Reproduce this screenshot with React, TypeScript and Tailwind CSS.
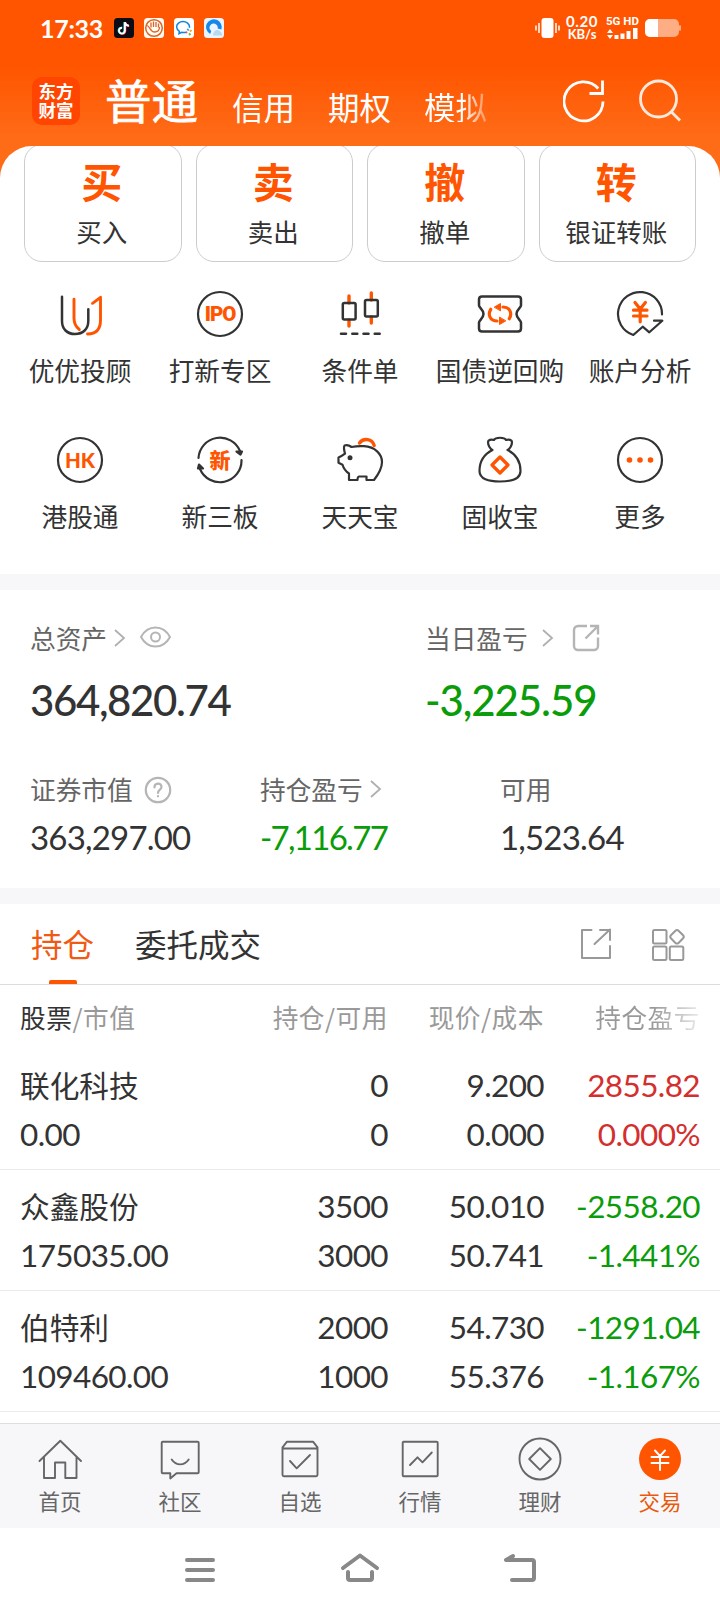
import type { ReactNode } from "react";

const DARK = "#333333";
const ORANGE = "#ff5500";

function Icon({ children, size = 48, stroke = DARK, width = 2.2, className = "" }: {
  children: ReactNode; size?: number; stroke?: string; width?: number; className?: string;
}) {
  return (
    <svg width={size} height={size} viewBox={`0 0 ${size} ${size}`} fill="none" stroke={stroke}
      strokeWidth={width} strokeLinecap="round" strokeLinejoin="round" className={`shrink-0 ${className}`}>
      {children}
    </svg>
  );
}

function Chevron() {
  return (
    <svg width="12" height="18" viewBox="0 0 12 18" fill="none" stroke="#b0b0b0" strokeWidth="1.8" className="shrink-0">
      <path d="M1 1l9 8-9 8" />
    </svg>
  );
}

function StatusBar() {
  return (
    <div className="flex h-[56px] items-center pl-[40px] pr-[39px] text-white">
      <span className="w-[74px] font-[Lato,sans-serif] text-[25px] font-bold leading-none tracking-[-0.3px]">17:33</span>
      <div className="flex gap-[10px]">
        <svg width="20" height="20" viewBox="0 0 20 20">
          <rect width="20" height="20" rx="3.5" fill="#0d0b14" />
          <g fill="none" strokeWidth="1.9">
            <path d="M10.4 4v8.6a2.9 2.9 0 1 1-2.7-3M10.4 4.4c.5 2 1.7 3 3.9 3.2" stroke="#25f4ee" />
            <path d="M11.4 4.4v8.6a2.9 2.9 0 0 1-4.6 2.3M11.6 5c.5 2 1.7 3 3.7 3.2" stroke="#fe2c55" />
            <path d="M10.9 4.2v8.6a2.9 2.9 0 1 1-2.7-3M11 4.6c.5 2 1.7 3 3.9 3.2" stroke="#fff" />
          </g>
        </svg>
        <svg width="20" height="20" viewBox="0 0 20 20" fill="none" stroke="#d9662b">
          <rect width="20" height="20" rx="3.5" fill="#fffaf2" stroke="none" />
          <circle cx="10" cy="10" r="8.3" strokeWidth="1.5" />
          <path d="M3 7.500c3 1 3.500 6.500 7.500 6.500 3 0 5-2 5-5M7 9.500V4.500M9.500 9V3.500M12 9V4M14.500 9.500V5.500" strokeWidth="1.3" />
        </svg>
        <svg width="20" height="20" viewBox="0 0 20 20" fill="none">
          <rect width="20" height="20" rx="3.5" fill="#fff" />
          <path d="M12.500 14.200c-1.500.5-3.300.5-4.700.1L5 15.700l.4-2.400C3.500 12 2.600 10.500 2.600 8.800c0-3 2.900-5.200 6.400-5.200s6.500 2.300 6.500 5.200v1" stroke="#1283d8" strokeWidth="1.5" />
          <path d="M13.200 10.800l1.600 1.700" stroke="#2aa5e8" strokeWidth="1.8" />
          <path d="M17.500 12l-1.500 1.700" stroke="#f7a520" strokeWidth="1.8" />
          <path d="M16.500 17l-1.600-1.600" stroke="#6cba3a" strokeWidth="1.8" />
          <path d="M11.800 14.800l1.500-.9" stroke="#e65b3a" strokeWidth="1.6" />
        </svg>
        <svg width="20" height="20" viewBox="0 0 20 20" fill="none">
          <rect width="20" height="20" rx="3.5" fill="#eaf5ff" />
          <path d="M6.200 16A7.800 7.800 0 1 1 17.300 11.500l-3.600-1a4.100 4.100 0 1 0-6.500 2.500z" fill="#1787e8" />
          <path d="M9 17.500c0-3 2-5.500 4-5.500s5 2 5.500 5.500z" fill="#b9d8f2" />
        </svg>
      </div>
      <div className="ml-auto flex items-center">
        <svg width="25" height="20" viewBox="0 0 25 20" fill="none" stroke="#fff" strokeWidth="1.5" className="mr-[5px]">
          <rect x="6.5" y="0" width="12" height="20" rx="3" fill="#fff" stroke="none" />
          <path d="M1 7.500v5M4 5v10M21 5v10M24 7.500v5" />
        </svg>
        <div className="flex w-[34px] flex-col items-center font-[Lato,sans-serif] font-bold">
          <span className="text-[15px] leading-[13px] tracking-[0.6px]">0.20</span>
          <span className="text-[13px] leading-[13px]">KB/s</span>
        </div>
        <div className="ml-[7px] flex w-[32px] flex-col gap-[2px]">
          <span className="whitespace-nowrap font-[Roboto,sans-serif] text-[11.5px] font-bold leading-[10px]">5G HD</span>
          <svg width="32" height="12" viewBox="0 0 32 12" fill="#fff">
            <path d="M1 5l3-4 3 4zM1 7l3 4 3-4zM8.500 7h4v4h-4zM14.500 5.500h4V11h-4zM20.500 3h4v8h-4zM27 0h4.500v11H27z" />
          </svg>
        </div>
        <svg width="36" height="18" viewBox="0 0 36 18" className="ml-[7px]">
          <path d="M5 0h24a5 5 0 0 1 5 5v1.500h2v5h-2V13a5 5 0 0 1-5 5H5a5 5 0 0 1-5-5V5a5 5 0 0 1 5-5z" fill="#ffad85" />
          <path d="M5 0h8v18H5a5 5 0 0 1-5-5V5a5 5 0 0 1 5-5z" fill="#fff" />
        </svg>
      </div>
    </div>
  );
}

function TitleBar() {
  return (
    <div className="flex h-[90px] items-center pl-[32px] pr-[39px] text-white">
      <div className="grid h-[48px] w-[48px] shrink-0 place-content-center rounded-[10px] bg-[#ff4500] pb-[2px] text-center text-[17.5px] font-bold leading-[19.5px]">
        <span>东方</span>
        <span>财富</span>
      </div>
      <span className="ml-[25px] w-[127px] pb-[3px] text-[46.5px] leading-none [-webkit-text-stroke:0.7px_white]">普通</span>
      <div className="flex gap-[33px] pt-[11px] text-[31.5px] leading-none">
        <span>信用</span>
        <span>期权</span>
        <span className="bg-gradient-to-r from-white from-60% to-white/30 bg-clip-text text-transparent">模拟</span>
      </div>
      <svg width="42" height="44" viewBox="0 0 42 44" fill="none" stroke="#fff" strokeWidth="2.8" className="ml-auto mr-[34px] shrink-0">
        <path d="M40 22.500A19.500 19.500 0 1 1 35.200 9.500M39.500 1.500v13h-13" />
      </svg>
      <svg width="42" height="44" viewBox="0 0 42 44" fill="none" stroke="#ffe9dc" strokeWidth="2.8" className="shrink-0">
        <circle cx="19.5" cy="20" r="18" />
        <path d="M32 32.500l9 9" />
      </svg>
    </div>
  );
}

const actions = [
  ["买", "买入"],
  ["卖", "卖出"],
  ["撤", "撤单"],
  ["转", "银证转账"],
];

function Actions() {
  return (
    <div className="-mt-[2px] grid grid-cols-4 gap-[14px] px-[24px]">
      {actions.map(([glyph, label]) => (
        <div key={label} className="flex h-[118px] flex-col items-center rounded-[18px] border border-[#cccccc] pr-[2px] pt-[15px]">
          <span className="text-[41px] font-bold leading-[40px] text-[#ff5500]">{glyph}</span>
          <span className="mt-[18px] text-[25.5px] leading-[26px] text-[#333]">{label}</span>
        </div>
      ))}
    </div>
  );
}

const services: { label: string; icon: ReactNode }[] = [
  {
    label: "优优投顾",
    icon: (
      <Icon width={2.5}>
        <path d="M6 6.700V31C6 39 11 44 19 44s13.300-5 13.300-13V19.300" />
        <path d="M18 9.300V28c0 6 2 9 5.300 11.500M31.500 44C40 44 44.500 39 44.500 30V7.300l-8 6" stroke={ORANGE} strokeWidth="2.9" />
      </Icon>
    ),
  },
  {
    label: "打新专区",
    icon: (
      <Icon>
        <circle cx="24" cy="24" r="22" />
        <text x="8.8" y="31" fontFamily="Roboto" fontWeight="900" fontSize="20.5" fill={ORANGE} stroke="none" textLength="31.5" lengthAdjust="spacing">IPO</text>
      </Icon>
    ),
  },
  {
    label: "条件单",
    icon: (
      <Icon width={2.5}>
        <path d="M13 6v7M13 30v6M35.300 3v7M35.300 27v6" stroke={ORANGE} strokeWidth="3.4" />
        <rect x="6.8" y="13" width="12.8" height="16.5" rx="1.5" />
        <rect x="29" y="10" width="12.8" height="16.5" rx="1.5" />
        <path d="M5 43.700h5M16.300 43.700h5M27.500 43.700h5M38.700 43.700h5" />
      </Icon>
    ),
  },
  {
    label: "国债逆回购",
    icon: (
      <Icon width={2.5}>
        <path d="M6 6.500h36q3 0 3 3v6c0 2-4.500 4-4.500 8.500s4.500 6.500 4.500 8.500v6q0 3-3 3H6q-3 0-3-3v-6c0-2 4.500-4 4.500-8.500S3 17.500 3 15.500v-6q0-3 3-3z" />
        <path d="M14.700 19.300C11.500 24.500 14 31 21 31M33.300 28.700C36.500 23.500 34 17 27 17" stroke={ORANGE} strokeWidth="3.2" />
        <path d="M23.500 27.500v7l6-3.500zM24.500 20.500v-7l-6 3.500z" fill={ORANGE} stroke={ORANGE} strokeWidth="1" />
      </Icon>
    ),
  },
  {
    label: "账户分析",
    icon: (
      <Icon>
        <path d="M46 24.500A22 22 0 1 0 17.300 45l9.400-8.300 6.600 5.600 13-11.600H38" />
        <path d="M19 12.500l5.200 6.500 5.200-6.500M17.500 20.200h13.500M17.500 26h13.500M24.200 19.500v12.300" stroke={ORANGE} strokeWidth="3.2" />
      </Icon>
    ),
  },
  {
    label: "港股通",
    icon: (
      <Icon>
        <circle cx="24" cy="24" r="22" />
        <text x="24" y="31.5" textAnchor="middle" fontFamily="Lato" fontWeight="900" fontSize="20.5" fill={ORANGE} stroke="none">HK</text>
      </Icon>
    ),
  },
  {
    label: "新三板",
    icon: (
      <Icon>
        <path d="M2.500 22A21.600 21.600 0 0 1 44 15M45.500 24A21.600 21.600 0 0 1 4 33" />
        <path d="M40.500 15.500h5.500l-1.500 3zM2 32.500l1-4 4 4z" fill={DARK} />
        <text x="24" y="31.5" textAnchor="middle" fontFamily="Noto Sans CJK SC" fontWeight="900" fontSize="21" fill={ORANGE} stroke="none">新</text>
      </Icon>
    ),
  },
  {
    label: "天天宝",
    icon: (
      <Icon>
        <path d="M23.500 7a8.300 8.300 0 0 1 14.700 2.500" stroke={ORANGE} strokeWidth="3.4" />
        <path d="M9 17.500C8 14 7.500 11 8.500 9.500c2.500-.8 5 0 7 1.500 5-1 9-1 12.500-.8 11 .5 18 8 18 15.800 0 7-4.500 13.500-8 18h-7.500v-3.500H23c-1.500.3-1.500 1.500-1.500 3.500H13v-6.500c-3-2-5.500-5.500-6.500-8.800l-4-2v-5.200c3-1.300 4.500-2.500 6.500-4z" />
        <circle cx="14" cy="21.7" r="2.5" fill={DARK} stroke="none" />
      </Icon>
    ),
  },
  {
    label: "固收宝",
    icon: (
      <Icon>
        <path d="M16.500 14c-2.500-1-4.500-5-4.500-8 0-2 3-3 6-2 1.500-3 10.500-3 12 0 3-1 6 0 6 2 0 3-2 7-4.500 8 7 3.500 13 10 13 21 0 8-9 10.500-20.500 10.500S3.500 43 3.500 35c0-11 6-17.500 13-21z" />
        <path d="M24 21l8 8-8 8-8-8z" stroke={ORANGE} strokeWidth="3.2" />
      </Icon>
    ),
  },
  {
    label: "更多",
    icon: (
      <Icon>
        <circle cx="24" cy="24" r="22" />
        <g fill={ORANGE} stroke="none">
          <circle cx="13.5" cy="24" r="2.8" />
          <circle cx="24" cy="24" r="2.8" />
          <circle cx="34.5" cy="24" r="2.8" />
        </g>
      </Icon>
    ),
  },
];

function Services() {
  return (
    <div className="mt-[28px] grid grid-cols-5 gap-y-[52px] px-[10px]">
      {services.map((s) => (
        <div key={s.label} className="flex h-[94px] flex-col items-center">
          {s.icon}
          <span className="mt-[19px] whitespace-nowrap text-[25.7px] leading-[26px] text-[#333]">{s.label}</span>
        </div>
      ))}
    </div>
  );
}

const labelText = "text-[25.7px] leading-[26px] text-[#666]";
const bigText = "font-[Lato,sans-serif] text-[42px] font-medium leading-[42px]";
const midText = "font-[Lato,sans-serif] text-[33px] leading-[33px]";

function Assets() {
  return (
    <div className="h-[298px] px-[30px] pt-[34px]">
      <div className="flex">
        <div className="w-[395px]">
          <div className="flex h-[28px] items-center">
            <span className={labelText}>总资产</span>
            <span className="ml-[7px]"><Chevron /></span>
            <svg width="31" height="22" viewBox="0 0 31 22" fill="none" stroke="#b5b5b5" strokeWidth="2" className="-mt-[2px] ml-[14px]">
              <path d="M1 11C4.500 4.500 9 1.500 15.500 1.500S26.500 4.500 30 11c-3.500 6.500-8 9.500-14.500 9.500S4.500 17.500 1 11z" />
              <circle cx="15.5" cy="11" r="4.5" />
            </svg>
          </div>
          <div className={`mt-[27px] tracking-[-1.4px] text-[#333] ${bigText}`}>364,820.74</div>
        </div>
        <div>
          <div className="flex h-[28px] items-center">
            <span className={labelText}>当日盈亏</span>
            <span className="ml-[14px]"><Chevron /></span>
            <svg width="28" height="28" viewBox="0 0 28 28" fill="none" stroke="#b5b5b5" strokeWidth="2.4" className="ml-[18px]">
              <path d="M15 2H6a4 4 0 0 0-4 4v16a4 4 0 0 0 4 4h16a4 4 0 0 0 4-4v-8.500M13.500 14.500L25.500 2.500M18 2h8v8.500" />
            </svg>
          </div>
          <div className={`mt-[27px] tracking-[-1.1px] text-[#0a9c0a] ${bigText}`}>-3,225.59</div>
        </div>
      </div>
      <div className="mt-[54px] flex">
        <div className="w-[230px]">
          <div className="flex h-[28px] items-center">
            <span className={labelText}>证券市值</span>
            <Icon size={28} stroke="#b5b5b5" className="ml-[11px] mt-[1px]">
              <circle cx="14" cy="14" r="12.2" />
              <path d="M10.500 11.500c0-5 7-5 7-.6 0 2.800-3.500 2.700-3.500 6M14 20v.3" />
            </Icon>
          </div>
          <div className={`mt-[18px] tracking-[-0.8px] text-[#333] ${midText}`}>363,297.00</div>
        </div>
        <div className="w-[240px]">
          <div className="flex h-[28px] items-center">
            <span className={labelText}>持仓盈亏</span>
            <span className="ml-[7px]"><Chevron /></span>
          </div>
          <div className={`mt-[18px] tracking-[-1.7px] text-[#0a9c0a] ${midText}`}>-7,116.77</div>
        </div>
        <div>
          <div className="flex h-[28px] items-center">
            <span className={labelText}>可用</span>
          </div>
          <div className={`mt-[18px] tracking-[-0.8px] text-[#333] ${midText}`}>1,523.64</div>
        </div>
      </div>
    </div>
  );
}

function Tabs() {
  return (
    <div className="flex h-[81px] items-stretch border-b border-[#dddddd] pl-[31px] pr-[35px] text-[31.5px] leading-none">
      <div className="flex flex-col items-center pt-[24px] text-[#f05a14]">
        <span>持仓</span>
        <span className="mt-auto h-[4px] w-[28px] rounded-t-[2px] bg-[#ff5500]" />
      </div>
      <span className="ml-[41px] pt-[24px] text-[#333]">委托成交</span>
      <Icon size={32} stroke="#999999" width={2} className="ml-auto mt-[24px]">
        <path d="M11.500 2H2v28h28V18M14.500 16L30 1.500M20 2h10v10" />
      </Icon>
      <Icon size={34} stroke="#999999" width={2} className="ml-[39px] mt-[24px]">
        <rect x="2" y="2" width="13.5" height="13.5" rx="1.5" />
        <rect x="2" y="18.5" width="13.5" height="13.5" rx="1.5" />
        <rect x="18.8" y="18.5" width="13.5" height="13.5" rx="1.5" />
        <rect x="20.600" y="3.4" width="10.8" height="10.8" rx="2.500" transform="rotate(45 26 8.800)" />
      </Icon>
    </div>
  );
}

const holdings = [
  { name: "联化科技", value: "0.00", held: "0", free: "0", price: "9.200", cost: "0.000", pl: "2855.82", pct: "0.000%", up: true },
  { name: "众鑫股份", value: "175035.00", held: "3500", free: "3000", price: "50.010", cost: "50.741", pl: "-2558.20", pct: "-1.441%", up: false },
  { name: "伯特利", value: "109460.00", held: "2000", free: "1000", price: "54.730", cost: "55.376", pl: "-1291.04", pct: "-1.167%", up: false },
];

const columns = "grid grid-cols-[208px_160px_156px_156px] px-[20px]";

function Holdings() {
  return (
    <div className="h-[438px] overflow-hidden">
      <div className={`${columns} h-[64px] items-center text-right text-[25.7px] leading-none tracking-[0.5px] text-[#999]`}>
        <span className="text-left"><span className="text-[#333]">股票</span>/市值</span>
        <span>持仓/可用</span>
        <span>现价/成本</span>
        <span className="bg-gradient-to-r from-[#999] from-70% to-[#999]/20 bg-clip-text text-transparent">持仓盈亏</span>
      </div>
      {holdings.map((h) => (
        <div key={h.name} className={`${columns} h-[121px] grid-rows-[49px_49px] border-b border-[#ebebeb] pt-[12px] text-right font-[Lato,sans-serif] text-[31.5px] leading-[49px] tracking-[-0.6px] text-[#333]`}>
          <span className="-mt-px text-left font-['Noto_Sans_CJK_SC',sans-serif] text-[29.7px] tracking-normal">{h.name}</span>
          <span>{h.held}</span>
          <span>{h.price}</span>
          <span className={h.up ? "text-[#d32f2f]" : "text-[#0a9c0a]"}>{h.pl}</span>
          <span className="text-left">{h.value}</span>
          <span>{h.free}</span>
          <span>{h.cost}</span>
          <span className={h.up ? "text-[#d32f2f]" : "text-[#0a9c0a]"}>{h.pct}</span>
        </div>
      ))}
    </div>
  );
}

const tabs: { label: string; icon: ReactNode; active?: boolean }[] = [
  { label: "首页", icon: <path d="M3.500 26L24.300 5.800 45 26M8 22v21h11V27.500h10.300V43h11.200V22" /> },
  { label: "社区", icon: <path d="M6.700 6.700h35a1 1 0 0 1 1 1v29.600a1 1 0 0 1-1 1H20.500L14.300 43.500v-5.200H6.700a1 1 0 0 1-1-1V7.700a1 1 0 0 1 1-1zM15.700 24.500c4.500 6.500 12.500 6.500 17 0" /> },
  { label: "自选", icon: <path d="M6.500 12.300l4.500-5.600h26l4.500 5.600v27.500q0 1.500-1.500 1.500H8q-1.500 0-1.500-1.500zM6.500 13.500h35M14 26l6.700 7.300L34 20" /> },
  { label: "行情", icon: <><rect x="6.7" y="6.7" width="35" height="34.6" rx="1" /><path d="M14 30l7.500-7.700 5 5 9.300-9.800" /></> },
  { label: "理财", icon: <><circle cx="24" cy="24" r="20.5" /><path d="M24 13.200L34.800 24 24 34.800 13.200 24z" /></> },
  { label: "交易", active: true, icon: <><circle cx="24" cy="24" r="21" fill={ORANGE} stroke="none" /><path d="M19 15.500l5 5.500 5-5.500M15.500 22h17M15.500 28h17M24 21v14" stroke="#fff" /></> },
];

function TabBar() {
  return (
    <div className="grid h-[105px] grid-cols-6 border-t border-[#dedede] bg-[#f7f7fa]">
      {tabs.map((t) => (
        <div key={t.label} className="flex flex-col items-center pt-[11px]">
          <Icon stroke="#666666" width={1.9}>{t.icon}</Icon>
          <span className={`mt-[7px] text-[21.5px] leading-[22px] ${t.active ? "text-[#e8590c]" : "text-[#666]"}`}>{t.label}</span>
        </div>
      ))}
    </div>
  );
}

function SystemNav() {
  return (
    <div className="flex h-[84px] items-center justify-center gap-[112px] bg-white">
      <Icon stroke="#888888" width={4}>
        <path d="M11 14h26M11 24h26M11 34h26" />
      </Icon>
      <Icon stroke="#888888" width={4}>
        <path d="M7 22L24 9.500 41 22M12 26v6q0 2 2 2h20q2 0 2-2v-6" />
      </Icon>
      <Icon stroke="#888888" width={4}>
        <path d="M17 10l-7 4h26q2 0 2 2v16q0 2-2 2H16" />
      </Icon>
    </div>
  );
}

export default function App() {
  return (
    <div className="flex h-[1612px] w-[720px] flex-col overflow-hidden bg-white font-['Noto_Sans_CJK_SC',sans-serif] font-normal">
      <div className="bg-[linear-gradient(180deg,#ff5500_0,#ff5500_66px,#ff6c18_140px,#ff6c18_100%)]">
        <StatusBar />
        <TitleBar />
        <div className="h-[428px] overflow-hidden rounded-t-[32px] bg-white">
          <Actions />
          <Services />
        </div>
      </div>
      <div className="h-[16px] bg-[#f7f7fa]" />
      <Assets />
      <div className="h-[16px] bg-[#f7f7fa]" />
      <Tabs />
      <Holdings />
      <TabBar />
      <SystemNav />
    </div>
  );
}
